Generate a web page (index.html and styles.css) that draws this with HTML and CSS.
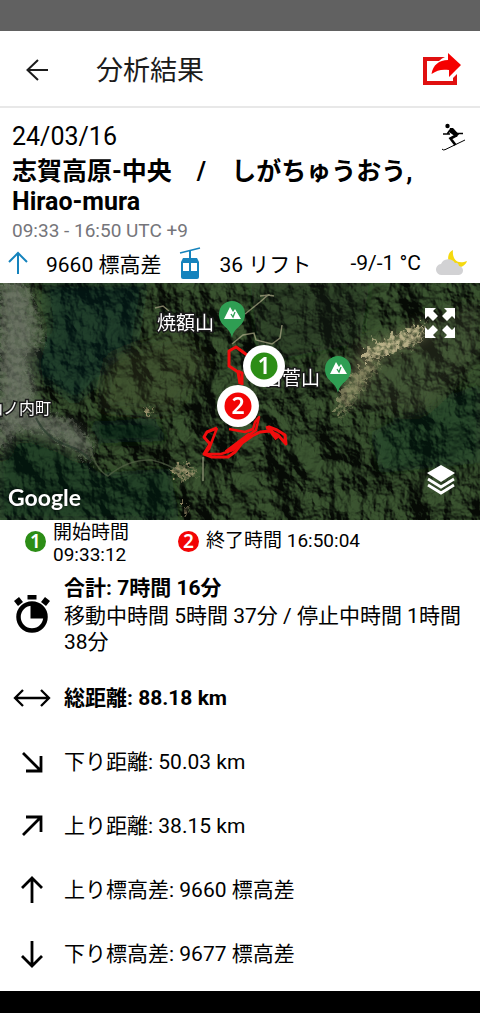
FILE: index.html
```html
<!DOCTYPE html>
<html lang="ja">
<head>
<meta charset="utf-8">
<meta name="viewport" content="width=device-width, initial-scale=1">
<title>分析結果</title>
<link rel="stylesheet" href="styles.css">
</head>
<body>
<div class="app">
  <div class="status-bar"></div>
  <header class="toolbar">
    <button class="icon-button" type="button" aria-label="戻る">
      <svg width="24" height="24" viewBox="0 0 24 24" fill="none" stroke="#1c1c1c" stroke-width="2"><path d="M23 12H2.500M13 2 2.500 12 13 22"/></svg>
    </button>
    <h1 class="title">分析結果</h1>
    <button class="icon-button share" type="button" aria-label="共有">
      <svg width="40" height="34" viewBox="0 0 40 34"><path d="M23 4H1v28h34V21l-4 4v3H5V8h12q3-3 6-4Z" fill="#e01010"/><path d="M9.500 21C11 12 17 7 26 7V0l13 12-12 12v-7c-7-1-12 0-17.500 4Z" fill="#f50000"/></svg>
    </button>
  </header>

  <main>
    <section class="summary">
      <div class="date-row">
        <span class="date">24/03/16</span>
        <svg class="skier" width="24" height="28" viewBox="0 0 24 28" fill="none" stroke="#000"><circle cx="5.500" cy="3" r="2.200" fill="#000" stroke="none"/><path d="M8 5 11 5l6 6.500-3 2.500-7-5Z" fill="#000" stroke="none"/><path d="M8 7 5.500 10.500M1 11h7M14 10.500h7" stroke-width="1.600"/><path d="m15 12-6.500 3.500 5 6.500" stroke-width="2.600"/><path d="M0 26q1 1.500 3 0.700L23 17" stroke-width="1"/></svg>
      </div>
      <h2 class="place">志賀高原-中央　/　しがちゅうおう, Hirao-mura</h2>
      <p class="period">09:33 - 16:50 UTC +9</p>
      <div class="facts">
        <svg class="climb" width="20" height="24" viewBox="0 0 20 24" fill="none" stroke="#1583bd" stroke-width="2"><path d="M10 23V2M1 11l9-9 9 9"/></svg>
        <span class="climb-value">9660 標高差</span>
        <svg width="22" height="32" viewBox="0 0 22 32"><path d="M1 6 21 1" stroke="#1583bd" stroke-width="1.600"/><path d="M11 4v9" stroke="#1583bd" stroke-width="2"/><path d="M4 11h14l2 4v15q0 2-2 2H4q-2 0-2-2V15Z" fill="#1583bd"/><path d="M4 16h6v8H4zM12 16h6v8h-6z" fill="#fff"/></svg>
        <span class="lift-value">36 リフト</span>
        <span class="temp">-9/-1 °C</span>
        <svg width="32" height="26" viewBox="0 0 32 26"><path d="M17 0c-1 9 4 15 14 11-2 6-10 9-16 4-5-5-3-13 2-15Z" fill="#f5d90f"/><path d="M6 25a5.500 5.500 0 0 1-1-11 8 8 0 0 1 14-1q3-1 4 3a4.500 4.500 0 0 1-1 9Z" fill="#d2d2d4"/></svg>
      </div>
    </section>

    <section class="map" aria-label="地図">
      <svg class="map-canvas" viewBox="0 0 480 237" preserveAspectRatio="xMidYMid slice">
        <defs>
          <filter id="relief" x="0" y="0" width="100%" height="100%" color-interpolation-filters="sRGB">
            <feTurbulence type="fractalNoise" baseFrequency="0.024 0.020" numOctaves="6" seed="23" result="n"/>
            <feColorMatrix in="n" type="matrix" values="0 0 0 0 0  0 0 0 0 0  0 0 0 0 0  1 0 0 0 0"/>
            <feDiffuseLighting surfaceScale="24" diffuseConstant="1" lighting-color="#435e36"><feDistantLight azimuth="315" elevation="42"/></feDiffuseLighting>
          </filter>
          <filter id="speckle" x="-10%" y="-10%" width="120%" height="120%" color-interpolation-filters="sRGB">
            <feTurbulence type="fractalNoise" baseFrequency="0.200" numOctaves="3" seed="5" result="n"/>
            <feDisplacementMap in="SourceGraphic" in2="n" scale="20" xChannelSelector="R" yChannelSelector="G" result="d"/>
            <feColorMatrix in="n" type="matrix" values="0 0 0 0 1  0 0 0 0 1  0 0 0 0 1  3 0 0 0 -0.900" result="m"/>
            <feComposite in="d" in2="m" operator="in" result="c"/>
            <feGaussianBlur in="c" stdDeviation="0.600"/>
          </filter>
          <filter id="soft" x="-30%" y="-30%" width="160%" height="160%"><feGaussianBlur stdDeviation="6"/></filter>
          <g id="peak"><path d="M0 33C-2 21-13 22-13 9a13 13 0 0 1 26 0C13 22 2 21 0 33Z" fill="#2f9e53"/><path d="M-8 14-2 2l3 5 2-3 6 10Z" fill="#fff"/><path d="m-1 9 2 3 2-5" fill="none" stroke="#2f9e53" stroke-width="1.300"/></g>
        </defs>
        <rect width="480" height="237" fill="#1f331d"/>
        <rect width="480" height="237" filter="url(#relief)" opacity="0.800"/>
        <g filter="url(#soft)">
          <path d="M45 0h100l-10 60-60 60-45-35 20-40Z" fill="#0d2523" opacity="0.450"/>
          <path d="M0 160 40 150l60 40 70-5 10 52H0Z" fill="#0c2418" opacity="0.400"/>
          <path d="M90 138h65l15 20-70 2Z" fill="#081a13" opacity="0.700"/>
          <path d="M250 0h120l-10 60-100 20Z" fill="#102a1a" opacity="0.350"/>
          <path d="m365 70 70-40 45-10v50l-60 60-70-10Z" fill="#606344" opacity="0.250"/>
          <path d="m370 150 40-20 70-30v80l-100 10Z" fill="#0b281c" opacity="0.300"/>
          <path d="m110 75 70-25 30 30-40 50-70-5Z" fill="#485132" opacity="0.300"/>
          <path d="M0 0h25l12 50-8 30 8 40 10 15 25 5 18 22-5 10-25-14-30-10-20 2L0 175Z" fill="#626a5c" opacity="0.800"/>
          <path d="m362 62 60-22 8 14-48 18-30 50-16 2Z" fill="#7b7b58" opacity="0.600"/>
        </g>
        <g filter="url(#speckle)">
          <path d="M0 0h28l14 35 4 25-20 14 10 30-5 18 44 16 20 22-2 24-20-19-30-18-25 2-18 22Z" fill="#858a7b" opacity="0.400"/>
          <path d="m366 64 60-24-5 20-55 20Z" fill="#d1c49a" opacity="0.800"/>
          <path d="m361 84 22-5-20 26-24 34-3-12 7-25Z" fill="#a6a278" opacity="0.600"/>
          <path d="m170 186 20-7 8 14-18 3ZM182 222l8 0-4 14ZM143 125l12 0-6 9Z" fill="#b0a17a" opacity="0.800"/>
        </g>
        <g fill="none" stroke="#b9b491" opacity="0.650">
          <path d="M90 165q6 22 18 28 20-17 44-16 16 4 28 12" stroke="#58654a" stroke-width="1.500"/>
          <path d="M36 135q10 20 30 27 16 5 24 15" stroke="#26382a" stroke-width="2"/>
          <path d="m232 61 11-9 11-2 2 7 16 4 8-6 2-13M245 31l15-12 8-7-8 1M268 12l6 1M155 25l8-2 6 5" stroke-width="1.500"/>
          <path d="M203 174v24" stroke="#929779" stroke-width="2"/>
        </g>
        <g class="map-label">
          <text x="157" y="47" font-size="19">焼額山</text>
          <text x="263" y="102" font-size="19">岩菅山</text>
          <text x="-13" y="131" font-size="16">山ノ内町</text>
        </g>
        <use href="#peak" x="232" y="22"/>
        <use href="#peak" x="338" y="77"/>
        <g fill="none" stroke="#f20d0d" stroke-width="3" stroke-linejoin="round">
          <path d="m247 72-11-8-7 4v15l9 6 2 12M238 88l4 2v12"/>
          <path d="m217 145-10 4-3 5 6 7-6 10 8 3h16l7-5 7-9 10-7 8-4 10-1 8 4 8 9-1-9-8-5-8-3-3 1" />
          <path d="m217 145-8 21-4 5 16 0 12-4 12-12 11-8 3-13-4 5-2 7-8 3-16-3" stroke-width="2.500"/>
          <path d="m226 169 12-9 12-9M268 144l9 12" stroke-width="4"/>
        </g>
        <g class="pin-number">
          <circle cx="264" cy="83" r="21" fill="#fff"/><circle cx="264" cy="83" r="13.500" fill="#2c8d16"/><text x="264" y="91">1</text>
          <circle cx="238" cy="123" r="21" fill="#fff"/><circle cx="238" cy="123" r="13.500" fill="#f20505"/><text x="238" y="131">2</text>
        </g>
      </svg>
      <button class="map-button expand" type="button" aria-label="全画面">
        <svg width="30" height="30" viewBox="0 0 30 30" fill="#fff"><g id="arrow"><path d="M0 0h11L8 3l5 5-5 5-5-5-3 3Z"/></g><use href="#arrow" transform="translate(30) scale(-1 1)"/><use href="#arrow" transform="translate(0 30) scale(1 -1)"/><use href="#arrow" transform="translate(30 30) scale(-1 -1)"/></svg>
      </button>
      <button class="map-button layers" type="button" aria-label="レイヤー">
        <svg width="28" height="30" viewBox="0 0 28 30"><path d="m14 0 14 8-14 9L0 8Z" fill="#fff"/><path d="m1 14 13 8 13-8M1 20l13 8 13-8" fill="none" stroke="#fff" stroke-width="2.800"/></svg>
      </button>
      <span class="attribution">Google</span>
    </section>

    <section class="times">
      <div class="time start"><span class="badge green">1</span><span>開始時間<br>09:33:12</span></div>
      <div class="time end"><span class="badge red">2</span><span>終了時間 16:50:04</span></div>
    </section>

    <ul class="stats">
      <li class="stat total">
        <svg width="38" height="40" viewBox="0 0 38 40"><circle cx="19" cy="23" r="13.500" fill="none" stroke="#000" stroke-width="4.500"/><path d="M17.500 11v13.500H31V23A12 12 0 0 0 19 11Z" fill="#000"/><path d="M19 14.500V23h8.500A8.500 8.500 0 0 0 19 14.500Z" fill="#000"/><path d="M14.500 1h9v4.500h-9zM1 7l5-4 4 5-5 4ZM37 7l-5-4-4 5 5 4Z" fill="#000"/></svg>
        <div><strong class="total-time">合計: 7時間 16分</strong><p class="split">移動中時間 5時間 37分 / 停止中時間 1時間 38分</p></div>
      </li>
      <li class="stat">
        <svg width="38" height="20" viewBox="0 0 38 20" fill="none" stroke="#000" stroke-width="2.300"><path d="M2 10h34M10 2l-8 8 8 8M28 2l8 8-8 8"/></svg>
        <strong>総距離: 88.18 km</strong>
      </li>
      <li class="stat">
        <svg width="38" height="24" viewBox="0 0 38 24" fill="none" stroke="#000" stroke-width="2.800"><path d="m10 3 18 18M28 6v15H13"/></svg>
        <span>下り距離: 50.03 km</span>
      </li>
      <li class="stat">
        <svg width="38" height="24" viewBox="0 0 38 24" fill="none" stroke="#000" stroke-width="2.800"><path d="M10 21 28 3M28 18V3H13"/></svg>
        <span>上り距離: 38.15 km</span>
      </li>
      <li class="stat">
        <svg width="38" height="28" viewBox="0 0 38 28" fill="none" stroke="#000" stroke-width="2.800"><path d="M19 27V2M9 12 19 2l10 10"/></svg>
        <span>上り標高差: 9660 標高差</span>
      </li>
      <li class="stat">
        <svg width="38" height="28" viewBox="0 0 38 28" fill="none" stroke="#000" stroke-width="2.800"><path d="M19 1v25M9 16l10 10 10-10"/></svg>
        <span>下り標高差: 9677 標高差</span>
      </li>
    </ul>
  </main>
  <div class="nav-bar"></div>
</div>
</body>
</html>
```
FILE: styles.css
```css
* { box-sizing: border-box; }
body {
  margin: 0;
  background: #fff;
  color: #000;
  font-family: Roboto, "Noto Sans CJK JP", sans-serif;
  font-size: 21px;
}
h1, h2, p, ul { margin: 0; padding: 0; }
svg { display: block; flex: none; }
button { border: 0; padding: 0; background: none; cursor: pointer; }

.app { display: flex; flex-direction: column; min-height: 100vh; }
main { flex: 1; }
.status-bar { height: 31px; background: #616161; }
.nav-bar { height: 22px; background: #000; }

.toolbar {
  display: flex;
  align-items: center;
  height: 77px;
  padding: 2px 18px 0 25px;
  border-bottom: 2px solid #e8e8e8;
}
.title {
  flex: 1;
  margin-left: 47px;
  padding-top: 2px;
  font-size: 27px;
  line-height: 36px;
  font-weight: 400;
  color: #1c1c1c;
}

.summary { padding-top: 11px; }
.date-row {
  display: flex;
  align-items: center;
  justify-content: space-between;
  padding: 0 14px 0 12px;
}
.date { font-size: 25px; line-height: 36px; }
.place {
  padding: 2px 12px 0;
  font-size: 25px;
  line-height: 30px;
  font-weight: 700;
}
.period {
  padding: 0 12px;
  font-size: 19px;
  line-height: 28px;
  color: #75757a;
}
.facts {
  display: flex;
  align-items: center;
  height: 38px;
  padding: 0 12px 3px 8px;
}
.climb-value { margin: 0 18px; }
.lift-value { margin-left: 18px; }
.temp { margin: 0 15px 0 auto; }

.map { position: relative; height: 237px; overflow: hidden; }
.map-canvas { width: 100%; height: 100%; }
.map-label {
  fill: #fff;
  stroke: #1a1a1a;
  stroke-width: 3px;
  paint-order: stroke;
}
.pin-number {
  fill: #fff;
  font-family: "Noto Sans", sans-serif;
  font-size: 23px;
  font-weight: 600;
  text-anchor: middle;
}
.map-button { position: absolute; right: 25px; }
.expand { top: 25px; }
.layers { bottom: 25px; }
.attribution {
  position: absolute;
  left: 8px;
  bottom: 8px;
  font-family: Lato, sans-serif;
  font-size: 23px;
  line-height: 30px;
  font-weight: 700;
  color: #fff;
  text-shadow: 0 0 2px #000;
}

.times {
  display: flex;
  gap: 49px;
  padding: 2px 12px 6px 25px;
  font-size: 19px;
  line-height: 22px;
}
.time { display: flex; align-items: center; gap: 7px; }
.start .badge { margin-bottom: 6px; }
.end { padding-bottom: 6px; }
.badge {
  width: 21px;
  height: 21px;
  border-radius: 50%;
  font-family: "Noto Sans", sans-serif;
  font-weight: 600;
  line-height: 21px;
  text-align: center;
  color: #fff;
}
.green { background: #2c8d16; }
.red { background: #f20505; }

.stats { list-style: none; }
.stat {
  display: flex;
  align-items: center;
  gap: 13px;
  min-height: 64px;
  padding: 0 12px 0 13px;
  line-height: 26px;
}
.total { min-height: 94px; padding-bottom: 10px; }
.total-time { display: block; line-height: 30px; }
```
